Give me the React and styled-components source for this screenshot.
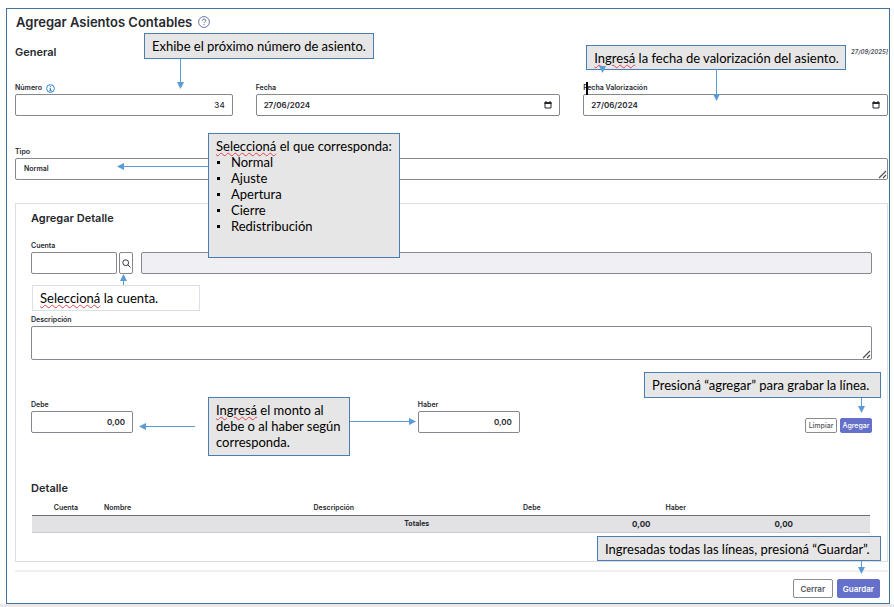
import React from "react";
import styled, { createGlobalStyle, css } from "styled-components";

const GlobalStyle = createGlobalStyle`
  *, *::before, *::after { box-sizing: border-box; }
  body {
    margin: 0;
    background: #fff;
    color: #26282e;
    font-family: Inter, "Open Sans", sans-serif;
    font-size: 7px;
    line-height: 10px;
  }
  button, input, textarea { font: inherit; color: inherit; }
`;

const Page = styled.div`
  padding: 8px 4px 0 6px;
  border-bottom: 3px solid #e9e9ec;
`;

const Frame = styled.main`
  border: 1px solid #41719c;
  padding: 4px 1px 5px 8px;
`;

const TitleRow = styled.header`
  display: flex;
  align-items: center;
  gap: 6px;
  height: 18px;
  padding-left: 1px;
`;

const Title = styled.h1`
  margin: 0;
  font-size: 13px;
  line-height: 18px;
  font-weight: 600;
`;

const HelpButton = styled.button`
  display: flex;
  padding: 0;
  border: 0;
  background: none;
  color: #5d6a96;
`;

const SectionRow = styled.div`
  display: flex;
  justify-content: space-between;
  align-items: center;
  margin-top: 13px;
`;

const Heading = styled.h2`
  margin: 0;
  font-size: 11px;
  line-height: 16px;
  font-weight: 600;
`;

const Period = styled.span`
  font-size: 6px;
  font-style: italic;
  font-weight: 600;
  color: #4c5160;
`;

const FieldGrid = styled.div`
  display: grid;
  grid-template-columns: 5fr 7fr 7fr;
  gap: 23px;
  margin-top: 23px;
`;

const Field = styled.div`
  position: relative;
  display: flex;
  flex-direction: column;
  gap: 1px;
  min-width: 0;
  margin-top: ${(p) => p.$top || 0}px;
  width: ${(p) => p.$width || "auto"};
`;

const Label = styled.label`
  display: flex;
  align-items: center;
  gap: 4px;
  height: 10px;
  font-weight: 600;
`;

const Control = styled.div`
  position: relative;
  display: flex;
`;

const box = css`
  display: block;
  width: 100%;
  margin: 0;
  border: 1px solid #85888f;
  border-radius: 2px;
  background: #fff;
  outline: 0;
`;

const TextInput = styled.input`
  ${box}
  height: 22px;
  padding: 0 7px;
  font-size: 8px;
  font-weight: ${(p) => (p.$plain ? 500 : 600)};
  text-align: ${(p) => (p.$right ? "right" : "left")};
  &:read-only { background: #efeff4; }
`;

const TextArea = styled.textarea`
  ${box}
  height: ${(p) => p.$height}px;
  padding: 5px 8px;
  font-weight: 600;
  resize: none;
  overflow: hidden;
`;

const Grip = styled.svg`
  position: absolute;
  right: 1px;
  bottom: 1px;
`;

const CalendarButton = styled.button`
  position: absolute;
  right: 8px;
  top: 7px;
  display: flex;
  padding: 0;
  border: 0;
  background: none;
`;

const Panel = styled.section`
  margin-top: 23px;
  padding: 6px 15px 28px;
  border: 1px solid #dddde6;
`;

const AccountRow = styled.div`
  display: grid;
  grid-template-columns: 86px 14px 1fr;
  column-gap: 2px;
  align-items: end;
  margin-top: 15px;
`;

const SearchButton = styled.button`
  display: flex;
  align-items: center;
  justify-content: center;
  height: 22px;
  padding: 0;
  border: 1px solid #85888f;
  border-radius: 2px;
  background: #fff;
`;

const AccountName = styled.div`
  padding-left: 6px;
`;

const AmountRow = styled.div`
  position: relative;
  display: grid;
  grid-template-columns: 46% 1fr auto;
  align-items: end;
  margin-top: 40px;
`;

const Actions = styled.div`
  display: flex;
  justify-content: flex-end;
  gap: ${(p) => (p.$large ? 4 : 3)}px;
  padding-right: ${(p) => (p.$large ? 8 : 0)}px;
`;

const Button = styled.button`
  min-width: ${(p) => (p.$large ? 40 : 32)}px;
  height: ${(p) => (p.$large ? 19 : 15)}px;
  padding: 0 ${(p) => (p.$large ? 5 : 1)}px;
  border: 1px solid ${(p) => (p.$primary ? "#6470c9" : "#8b8c92")};
  border-radius: 2px;
  background: ${(p) => (p.$primary ? "#6470c9" : "#fff")};
  color: ${(p) => (p.$primary ? "#fff" : "#555860")};
  font-size: ${(p) => (p.$large ? 8 : 7)}px;
  font-weight: ${(p) => (p.$large ? 600 : 500)};
  line-height: 10px;
`;

const DetailHeading = styled(Heading)`
  margin-top: 47px;
`;

const Table = styled.table`
  width: calc(100% - 3px);
  margin: 6px 2px 0 1px;
  border-collapse: collapse;
  table-layout: fixed;
`;

const HeadCell = styled.th`
  width: ${(p) => p.$width};
  padding: 1px 5px 2px;
  border-bottom: 1px solid #6b6d72;
  text-align: left;
  font-weight: 600;
`;

const TotalCell = styled.td`
  height: 17px;
  padding: ${(p) => (p.$align === "center" ? "0 5px 0 12px" : "0 10px 0 5px")};
  border-bottom: 1px solid #c9cacd;
  background: #e2e2e5;
  font-size: ${(p) => (p.$align === "center" ? 7 : 8)}px;
  font-weight: 700;
  text-align: ${(p) => p.$align || "left"};
`;

const Footer = styled.footer`
  position: relative;
  margin-top: 8px;
  padding-top: 7px;
  border-top: 2px solid #f0f0f2;
`;

const Callout = styled.aside`
  position: absolute;
  z-index: 2;
  top: ${(p) => p.$top}px;
  left: ${(p) => p.$left};
  right: ${(p) => p.$right};
  width: ${(p) => p.$width}px;
  min-height: ${(p) => p.$height}px;
  padding: 4px 6px 3px 7px;
  border: 1px solid ${(p) => (p.$light ? "#dbe0e6" : "#4a7db0")};
  background: ${(p) => (p.$light ? "#fff" : "#e7e6e6")};
  color: #000;
  font-family: Lato, "Open Sans", sans-serif;
  font-size: 13px;
  line-height: 16px;
  font-weight: 400;
  white-space: ${(p) => (p.$wrap ? "normal" : "nowrap")};
`;

const Misspelled = styled.span`
  text-decoration: underline wavy #e0454f 1px;
  text-underline-offset: 1px;
`;

const Options = styled.ul`
  margin: 0;
  padding: 0;
  list-style: none;
`;

const Option = styled.li`
  display: flex;
  align-items: center;
  gap: 11px;
  &::before {
    content: "";
    width: 3px;
    height: 3px;
    margin-left: 1px;
    background: #000;
  }
`;

const ArrowSvg = styled.svg`
  position: absolute;
  z-index: 3;
  top: ${(p) => p.$top}px;
  left: ${(p) => p.$left};
  right: ${(p) => p.$right};
  pointer-events: none;
`;

const Caret = styled.span`
  position: absolute;
  top: -1px;
  left: 3px;
  width: 2px;
  height: 13px;
  background: #000;
`;

function Arrow({ dir, length, top, left, right }) {
  const vertical = dir === "down" || dir === "up";
  const w = vertical ? 7 : length;
  const h = vertical ? length : 7;
  const shapes = {
    down: [`M3.5 0V${length - 6}`, `0,${length - 7} 7,${length - 7} 3.5,${length}`],
    up: [`M3.5 6V${length}`, "0,7 7,7 3.5,0"],
    left: [`M6 3.5H${length}`, "7,0 7,7 0,3.5"],
    right: [`M0 3.5H${length - 6}`, `${length - 7},0 ${length - 7},7 ${length},3.5`],
  };
  const [line, head] = shapes[dir];
  return (
    <ArrowSvg width={w} height={h} $top={top} $left={left} $right={right} aria-hidden="true">
      <path d={line} stroke="#5b9bd5" fill="none" />
      <polygon points={head} fill="#5b9bd5" />
    </ArrowSvg>
  );
}

function ResizeGrip() {
  return (
    <Grip width="9" height="9" viewBox="0 0 9 9" aria-hidden="true">
      <path d="M1 8L8 1M5 8L8 5" stroke="#4b4d52" strokeWidth="1.2" />
    </Grip>
  );
}

function DateField({ id, label, value, children }) {
  return (
    <Field>
      <Label htmlFor={id}>{label}</Label>
      <Control>
        <TextInput id={id} defaultValue={value} />
        <CalendarButton type="button" aria-label={`Abrir calendario de ${label}`}>
          <svg width="8" height="8" viewBox="0 0 8 8">
            <path d="M1 1.5h6v5.500h-6z" fill="none" stroke="#25272c" />
            <path d="M.5 1h7v2h-7zM1.500 0h1v1h-1zM5.500 0h1v1h-1z" fill="#25272c" />
          </svg>
        </CalendarButton>
      </Control>
      {children}
    </Field>
  );
}

const columns = [
  { name: "", width: "2%" },
  { name: "Cuenta", width: "6%" },
  { name: "Nombre", width: "25%" },
  { name: "Descripción", width: "25%" },
  { name: "Debe", width: "17%" },
  { name: "Haber", width: "17%" },
  { name: "", width: "8%" },
];

const entryTypes = ["Normal", "Ajuste", "Apertura", "Cierre", "Redistribución"];

export default function App() {
  return (
    <>
      <GlobalStyle />
      <Page>
        <Frame>
          <TitleRow>
            <Title>Agregar Asientos Contables</Title>
            <HelpButton type="button" aria-label="Ayuda">
              <svg width="12" height="12" viewBox="0 0 12 12" fill="none" stroke="currentColor">
                <circle cx="6" cy="6" r="5.400" strokeWidth=".9" />
                <path d="M4.400 4.700c0-2.100 3.300-2.100 3.300-.1 0 1.100-1.600 1.200-1.600 2.500M6.100 8v1.100" />
              </svg>
            </HelpButton>
          </TitleRow>

          <SectionRow>
            <Heading>General</Heading>
            <Period>27/09/2025]</Period>
          </SectionRow>

          <FieldGrid>
            <Field>
              <Label htmlFor="numero">
                Número
                <svg width="9" height="9" viewBox="0 0 9 9" fill="none" stroke="#2f86c5" aria-hidden="true">
                  <circle cx="4.500" cy="4.500" r="3.900" />
                  <path d="M4.500 2v1.100M3.500 4.200h1v2.500M3.200 6.700h2.600" />
                </svg>
              </Label>
              <TextInput id="numero" defaultValue="34" $right $plain />
              <Callout $top={-50} $left="129px" $width={230} $height={26}>
                Exhibe el próximo número de asiento.
              </Callout>
              <Arrow dir="down" length={30} top={-24} left="162px" />
            </Field>
            <DateField id="fecha" label="Fecha" value="27/06/2024" />
            <DateField id="valorizacion" label="Fecha Valorización" value="27/06/2024">
              <Caret aria-hidden="true" />
              <Callout $top={-38} $left="3px" $width={260} $height={25}>
                <Misspelled>Ingresá</Misspelled> la fecha de valorización del asiento.
              </Callout>
              <Arrow dir="down" length={7} top={-17} left="16px" />
              <Arrow dir="down" length={32} top={-14} left="130px" />
            </DateField>
          </FieldGrid>

          <Field $top={31}>
            <Label htmlFor="tipo">Tipo</Label>
            <Control>
              <TextArea id="tipo" rows={1} defaultValue="Normal" $height={22} />
              <ResizeGrip />
            </Control>
            <Callout $top={-14} $left="193px" $width={192} $height={125}>
              <Misspelled>Seleccioná</Misspelled> el que corresponda:
              <Options>
                {entryTypes.map((type) => (
                  <Option key={type}>{type}</Option>
                ))}
              </Options>
            </Callout>
            <Arrow dir="left" length={91} top={16} left="102px" />
          </Field>

          <Panel>
            <Heading>Agregar Detalle</Heading>
            <AccountRow>
              <Field>
                <Label htmlFor="cuenta">Cuenta</Label>
                <TextInput id="cuenta" />
                <Callout $top={44} $left="1px" $width={168} $height={26} $light>
                  <Misspelled>Seleccioná</Misspelled> la cuenta.
                </Callout>
                <Arrow dir="up" length={11} top={33} left="89px" />
              </Field>
              <SearchButton type="button" aria-label="Buscar cuenta">
                <svg width="9" height="9" viewBox="0 0 9 9" fill="none" stroke="#333740">
                  <circle cx="3.700" cy="3.700" r="2.900" />
                  <path d="M5.800 5.800L8.500 8.500" />
                </svg>
              </SearchButton>
              <AccountName>
                <TextInput readOnly aria-label="Nombre de la cuenta" />
              </AccountName>
            </AccountRow>

            <Field $top={41}>
              <Label htmlFor="descripcion">Descripción</Label>
              <Control>
                <TextArea id="descripcion" $height={34} />
                <ResizeGrip />
              </Control>
            </Field>

            <AmountRow>
              <Field $width="102px">
                <Label htmlFor="debe">Debe</Label>
                <TextInput id="debe" defaultValue="0,00" $right />
              </Field>
              <Field $width="102px">
                <Label htmlFor="haber">Haber</Label>
                <TextInput id="haber" defaultValue="0,00" $right />
                <Arrow dir="right" length={66} top={18} right="104px" />
              </Field>
              <Actions>
                <Button type="button">Limpiar</Button>
                <Button type="button" $primary>Agregar</Button>
              </Actions>
              <Arrow dir="left" length={56} top={23} left="108px" />
              <Callout $top={-3} $left="177px" $width={142} $height={59} $wrap>
                <Misspelled>Ingresá</Misspelled> el monto al debe o al haber según corresponda.
              </Callout>
              <Callout $top={-28} $right="-9px" $width={237} $height={26}>
                Presioná “agregar” para grabar la línea.
              </Callout>
              <Arrow dir="down" length={15} top={-2} right="7px" />
            </AmountRow>

            <DetailHeading>Detalle</DetailHeading>
            <Table>
              <thead>
                <tr>
                  {columns.map((c, i) => (
                    <HeadCell key={i} $width={c.width}>{c.name}</HeadCell>
                  ))}
                </tr>
              </thead>
              <tbody>
                <tr>
                  <TotalCell colSpan={3} />
                  <TotalCell $align="center">Totales</TotalCell>
                  <TotalCell $align="right">0,00</TotalCell>
                  <TotalCell $align="right">0,00</TotalCell>
                  <TotalCell />
                </tr>
              </tbody>
            </Table>
          </Panel>

          <Footer>
            <Callout $top={-36} $right="7px" $width={284} $height={25}>
              Ingresadas todas las líneas, presioná “Guardar”.
            </Callout>
            <Arrow dir="down" length={13} top={-11} right="23px" />
            <Actions $large>
              <Button type="button" $large>Cerrar</Button>
              <Button type="button" $large $primary>Guardar</Button>
            </Actions>
          </Footer>
        </Frame>
      </Page>
    </>
  );
}
